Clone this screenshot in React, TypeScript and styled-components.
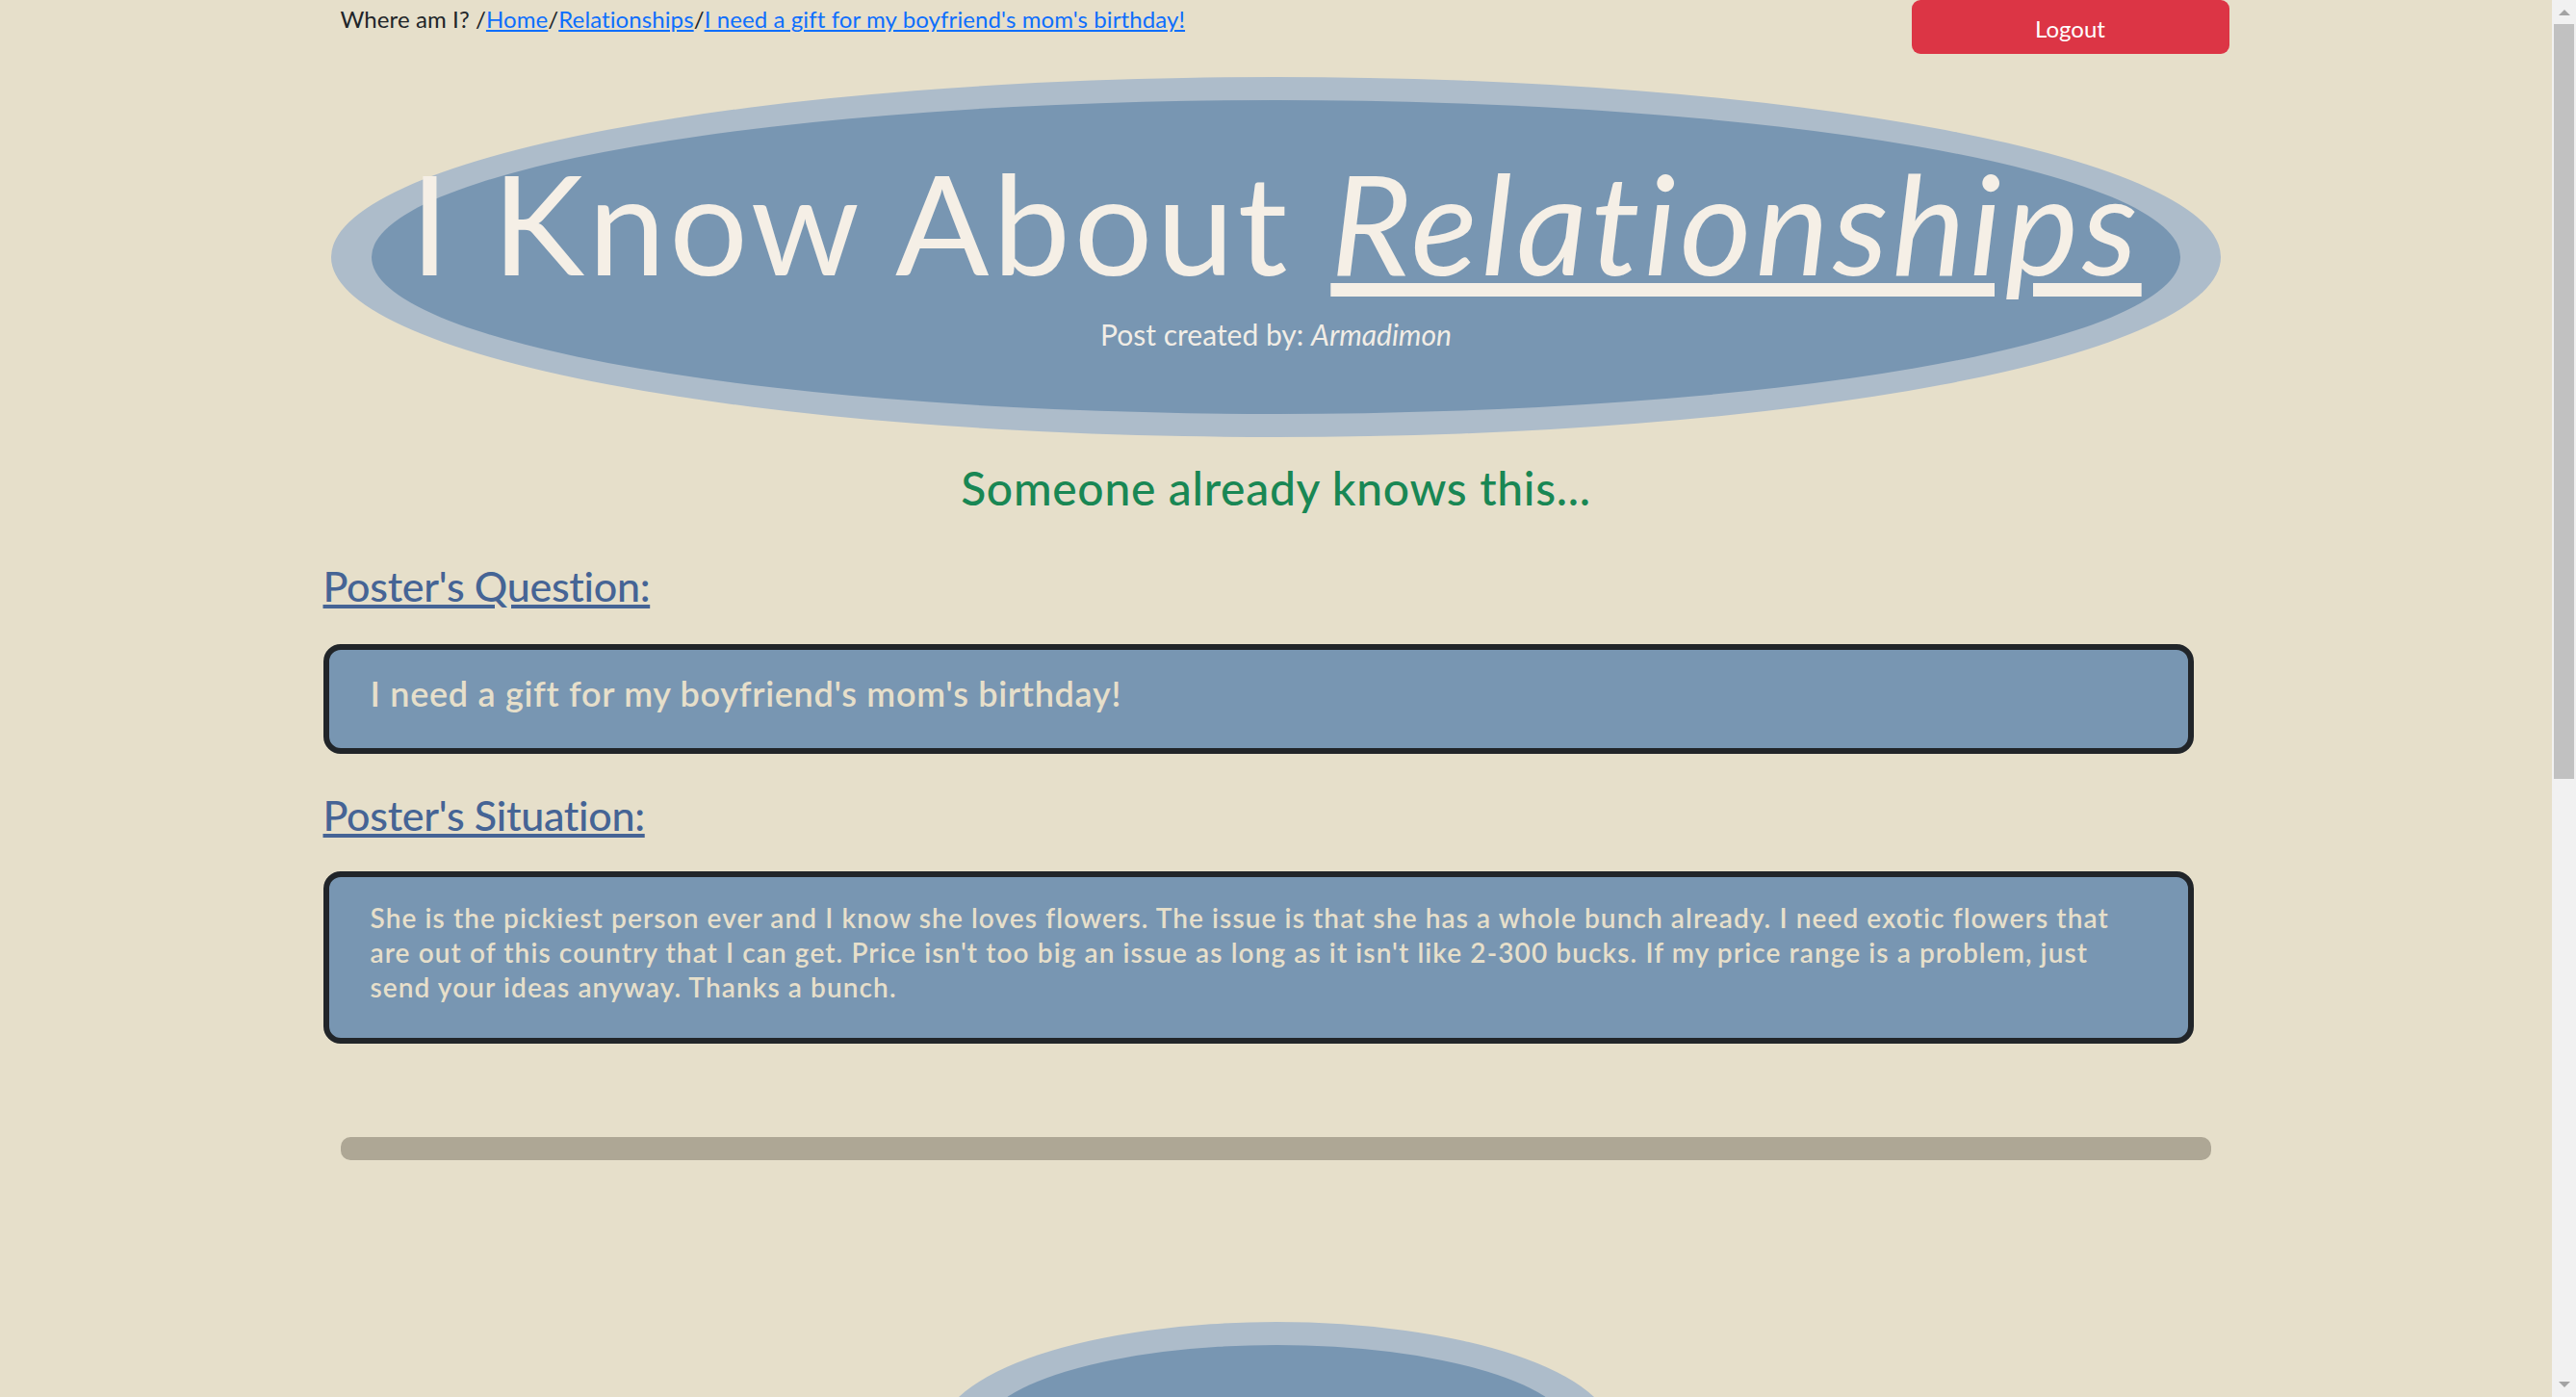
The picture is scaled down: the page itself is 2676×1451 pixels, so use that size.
import React from "react";
import styled, { createGlobalStyle } from "styled-components";

const GlobalStyle = createGlobalStyle`
  html, body {
    margin: 0;
    padding: 0;
    background: #e6dfca;
  }
  body {
    font-family: Lato, "Open Sans", "Noto Sans", sans-serif;
    color: #212529;
  }
  *, *::before, *::after { box-sizing: border-box; }
`;

const Page = styled.div`
  min-height: 2593px;
  padding-right: 25px;
`;

const Container = styled.div`
  width: 1980px;
  margin: 0 auto;
`;

const TopBar = styled.header`
  display: flex;
  justify-content: space-between;
  align-items: flex-start;
  height: 56px;
`;

const Breadcrumb = styled.nav`
  padding: 2px 0 0 18px;
  font-size: 24px;
  line-height: 36px;
  letter-spacing: 0.1px;
  color: #212529;
`;

const CrumbLink = styled.a`
  color: #0d6efd;
  text-decoration: underline;
  cursor: pointer;
`;

const LogoutButton = styled.button`
  width: 330px;
  height: 56px;
  border: none;
  border-radius: 9px;
  background: #dc3545;
  color: #ffffff;
  font-family: inherit;
  font-size: 24px;
  padding: 2px 0 0;
  display: flex;
  align-items: center;
  justify-content: center;
  cursor: pointer;
`;

const Ring = styled.div<{ $width: number; $height?: number; $top: number }>`
  width: ${(p) => p.$width}px;
  ${(p) => (p.$height ? `height: ${p.$height}px;` : "")}
  margin: ${(p) => p.$top}px auto 0;
  padding: 24px 42px;
  border-radius: 50%;
  background: #adbcca;
`;

const Oval = styled.div<{ $height?: number }>`
  height: ${(p) => (p.$height ? `${p.$height}px` : "100%")};
  border-radius: 50%;
  background: #7896b2;
  display: flex;
  flex-direction: column;
  align-items: center;
  padding-top: 41px;
`;

const Title = styled.h1`
  margin: 0;
  font-size: 144px;
  font-weight: 400;
  line-height: 1.2;
  letter-spacing: 4px;
  color: #f5efe6;
  white-space: nowrap;
`;

const TitleEmphasis = styled.em`
  font-style: italic;
  text-decoration: underline;
  text-decoration-thickness: 14px;
  text-underline-offset: 8px;
`;

const Byline = styled.p`
  margin: 7px 0 0;
  font-size: 30px;
  line-height: 45px;
  font-weight: 400;
  color: #f1ede6;
`;

const Tagline = styled.h2`
  margin: 24px 0 0;
  text-align: center;
  color: #198754;
  font-size: 48px;
  font-weight: 500;
  line-height: 1.2;
  letter-spacing: 0.7px;
`;

const SectionHeading = styled.h2<{ $gap: number }>`
  margin: ${(p) => p.$gap}px 0 0;
  color: #456495;
  font-size: 43px;
  font-weight: 500;
  line-height: 1.2;
  letter-spacing: -0.3px;
  text-decoration: underline;
  text-decoration-thickness: 4px;
  text-underline-offset: 3px;
`;

const InfoBox = styled.div<{ $gap: number }>`
  margin-top: ${(p) => p.$gap}px;
  width: 1943px;
  border: 6px solid #212529;
  border-radius: 18px;
  background: #7896b2;
  padding: 24px 43px 35px;
  color: #e6dfca;
  font-weight: 600;
`;

const QuestionText = styled.p`
  margin: 0;
  font-size: 36px;
  line-height: 1.2;
  letter-spacing: 0.7px;
`;

const SituationText = styled.p`
  margin: 0;
  font-size: 28px;
  line-height: 36px;
  letter-spacing: 1.1px;
`;

const Divider = styled.div`
  margin: 97px 0 0 18px;
  width: 1943px;
  height: 24px;
  border-radius: 10px;
  background: #aea795;
`;

/* Window scrollbar as seen in the screenshot (overlay on the right edge) */
const ScrollTrack = styled.div`
  position: fixed;
  top: 0;
  right: 0;
  width: 25px;
  height: 100vh;
  background: #f1f1f1;
`;

const ScrollArrow = styled.div<{ $down?: boolean }>`
  position: absolute;
  left: 7px;
  ${(p) => (p.$down ? "bottom: 10px;" : "top: 10px;")}
  width: 0;
  height: 0;
  border-left: 6px solid transparent;
  border-right: 6px solid transparent;
  ${(p) =>
    p.$down ? "border-top: 6px solid #a3a3a3;" : "border-bottom: 6px solid #a3a3a3;"}
`;

const ScrollThumb = styled.div`
  position: absolute;
  top: 25px;
  left: 2px;
  width: 21px;
  height: 784px;
  background: #c1c1c1;
`;

export default function App() {
  return (
    <Page>
      <GlobalStyle />
      <Container>
        <TopBar>
          <Breadcrumb>
            Where am I? /<CrumbLink>Home</CrumbLink>/<CrumbLink>Relationships</CrumbLink>/
            <CrumbLink>I need a gift for my boyfriend's mom's birthday!</CrumbLink>
          </Breadcrumb>
          <LogoutButton>Logout</LogoutButton>
        </TopBar>

        <Ring $width={1963} $top={24}>
          <Oval $height={326}>
            <Title>
              I Know About <TitleEmphasis>Relationships</TitleEmphasis>
            </Title>
            <Byline>
              Post created by: <em>Armadimon</em>
            </Byline>
          </Oval>
        </Ring>

        <Tagline>Someone already knows this...</Tagline>

        <SectionHeading $gap={47}>Poster's Question:</SectionHeading>
        <InfoBox $gap={35}>
          <QuestionText>I need a gift for my boyfriend's mom's birthday!</QuestionText>
        </InfoBox>

        <SectionHeading $gap={38}>Poster's Situation:</SectionHeading>
        <InfoBox $gap={32}>
          <SituationText>
            She is the pickiest person ever and I know she loves flowers. The issue is that she has a
            whole bunch already. I need exotic flowers that are out of this country that I can get.
            Price isn't too big an issue as long as it isn't like 2-300 bucks. If my price range is a
            problem, just send your ideas anyway. Thanks a bunch.
          </SituationText>
        </InfoBox>

        <Divider />

        <Ring $width={700} $height={234} $top={168}>
          <Oval />
        </Ring>
      </Container>
      <ScrollTrack>
        <ScrollArrow />
        <ScrollThumb />
        <ScrollArrow $down />
      </ScrollTrack>
    </Page>
  );
}
